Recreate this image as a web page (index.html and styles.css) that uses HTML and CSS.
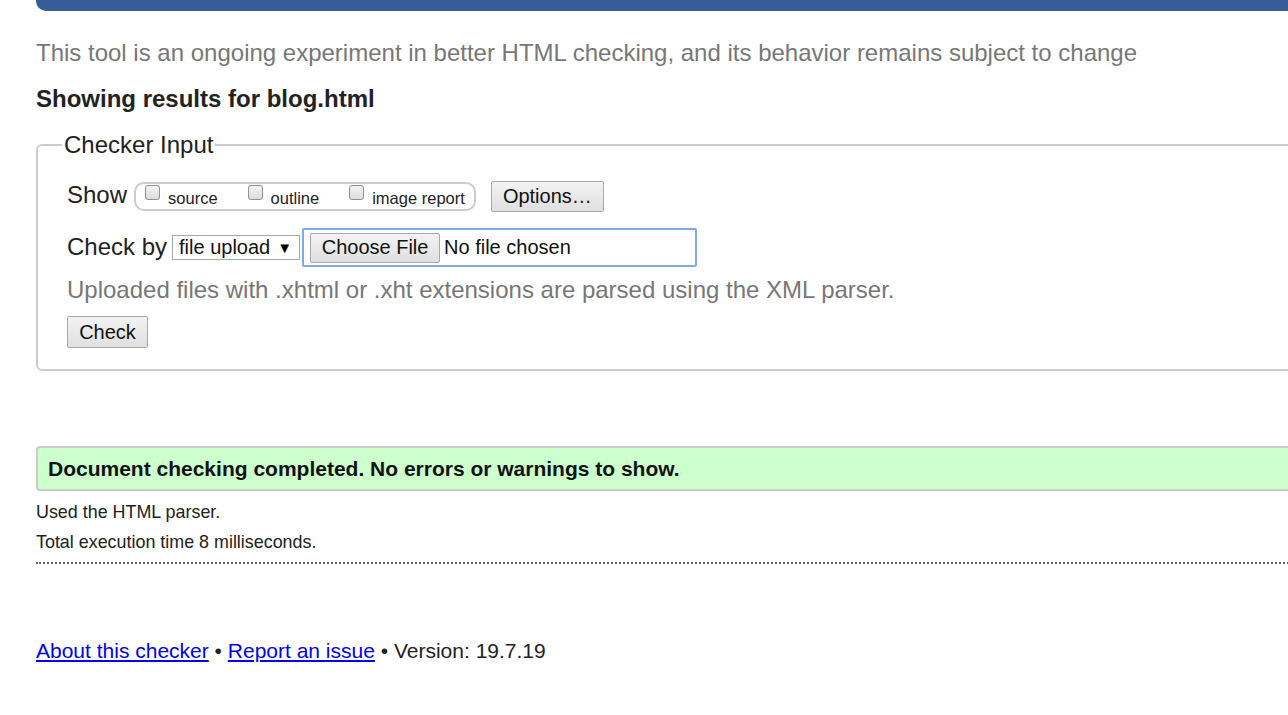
FILE: index.html
```html
<!DOCTYPE html>
<html lang="en">
<head>
<meta charset="utf-8">
<title>Nu Html Checker</title>
<link rel="stylesheet" href="styles.css">
</head>
<body>
<div class="page">
  <div class="topbar"></div>
  <p class="intro">This tool is an ongoing experiment in better HTML checking, and its behavior remains subject to change</p>
  <h2 class="results">Showing results for blog.html</h2>
  <fieldset class="checker">
    <legend>Checker Input</legend>
    <div class="row show-row">
      <span class="label">Show</span>
      <span class="opts">
        <label class="opt"><span class="cb"></span><span class="opt-text">source</span></label>
        <label class="opt"><span class="cb"></span><span class="opt-text">outline</span></label>
        <label class="opt"><span class="cb"></span><span class="opt-text">image report</span></label>
      </span>
      <button class="btn btn-options" type="button">Options…</button>
    </div>
    <div class="row by-row">
      <span class="label">Check by</span>
      <span class="select">file upload<span class="arrow">▼</span></span>
      <span class="file">
        <button class="btn btn-file" type="button">Choose File</button>
        <span class="file-name">No file chosen</span>
      </span>
    </div>
    <p class="hint">Uploaded files with .xhtml or .xht extensions are parsed using the XML parser.</p>
    <button class="btn btn-check" type="button">Check</button>
  </fieldset>
  <div class="success">Document checking completed. No errors or warnings to show.</div>
  <p class="stats">Used the HTML parser.</p>
  <p class="stats">Total execution time 8 milliseconds.</p>
  <div class="dotted"></div>
  <p class="footer"><a href="#">About this checker</a> • <a href="#">Report an issue</a> • Version: 19.7.19</p>
</div>
</body>
</html>
```
FILE: styles.css
```css
html, body {
  margin: 0;
  padding: 0;
  overflow: hidden;
  background: #fff;
}
body {
  font-family: "Liberation Sans", Arial, sans-serif;
  color: #222;
}
.page {
  margin-left: 36px;
  width: 1320px;
}
.topbar {
  height: 11px;
  background: #365d95;
  border-bottom-left-radius: 10px;
}
.intro {
  margin: 28px 0 0;
  font-size: 24px;
  color: #777;
}
.results {
  margin: 18px 0 0;
  font-size: 24px;
  font-weight: bold;
  color: #222;
}
.checker {
  margin: 18px 0 0;
  border: 2px solid #ccc;
  border-radius: 6px;
  padding: 22px 29px 21px 29px;
  min-width: 0;
}
.checker legend {
  font-size: 24px;
  padding: 0 2px;
  margin-left: -5px;
  color: #222;
}
.row {
  display: flex;
  align-items: center;
}
.label {
  font-size: 24px;
  color: #222;
}
.show-row .label {
  margin-right: 7px;
  padding-bottom: 3px;
}
.opts {
  display: inline-flex;
  align-items: flex-start;
  box-sizing: border-box;
  height: 29px;
  border: 2px solid #ccc;
  border-radius: 10px;
  padding: 0 9px 0 9px;
  gap: 30px;
}
.opt {
  display: inline-flex;
  align-items: flex-start;
  gap: 8px;
  font-size: 16.5px;
}
.cb {
  display: inline-block;
  box-sizing: border-box;
  width: 15px;
  height: 15px;
  margin-top: 1px;
  border: 1px solid #8f8f8f;
  border-radius: 3px;
  background: linear-gradient(#f4f4f4, #dcdcdc);
}
.opt-text {
  line-height: 18px;
  padding-top: 5px;
}
.btn {
  font-family: "Liberation Sans", Arial, sans-serif;
  font-size: 20px;
  color: #111;
  box-sizing: border-box;
  border: 1px solid #a9a9a9;
  border-radius: 2px;
  background: linear-gradient(#f3f3f3, #dfdfdf);
  padding: 0;
}
.btn-options {
  margin-left: 15px;
  width: 113px;
  height: 31px;
}
.by-row {
  margin-top: 16px;
}
.by-row .label {
  margin-right: 5px;
  padding-bottom: 1px;
}
.select {
  box-sizing: border-box;
  display: inline-flex;
  align-items: center;
  justify-content: space-between;
  width: 128px;
  height: 25px;
  border: 1px solid #a9a9a9;
  background: #fff;
  padding: 0 7px 0 6px;
  font-size: 20px;
  color: #111;
}
.arrow {
  font-size: 15px;
  color: #000;
}
.file {
  box-sizing: border-box;
  display: inline-flex;
  align-items: center;
  margin-left: 2px;
  width: 395px;
  height: 39px;
  border: 2px solid #7eaaea;
  border-radius: 2px;
  padding: 0 6px;
  gap: 4px;
  font-size: 20px;
  color: #111;
}
.btn-file {
  width: 130px;
  height: 30px;
}
.hint {
  margin: 9px 0 0;
  font-size: 24px;
  color: #777;
}
.btn-check {
  margin-top: 12px;
  width: 81px;
  height: 32px;
  display: block;
}
.success {
  margin-top: 75px;
  box-sizing: border-box;
  height: 45px;
  border: 2px solid #ccc;
  border-radius: 4px;
  background: #ccffcc;
  padding: 0 10px;
  display: flex;
  align-items: center;
  font-size: 21px;
  font-weight: bold;
  color: #111;
}
.stats {
  margin: 11px 0 0;
  font-size: 17.9px;
  color: #222;
}
.stats + .stats {
  margin-top: 9px;
}
.dotted {
  margin-top: 9px;
  border-top: 2px dotted #666;
}
.footer {
  margin: 75px 0 0;
  font-size: 21px;
  color: #222;
}
.footer a {
  color: #0000ee;
}
```
